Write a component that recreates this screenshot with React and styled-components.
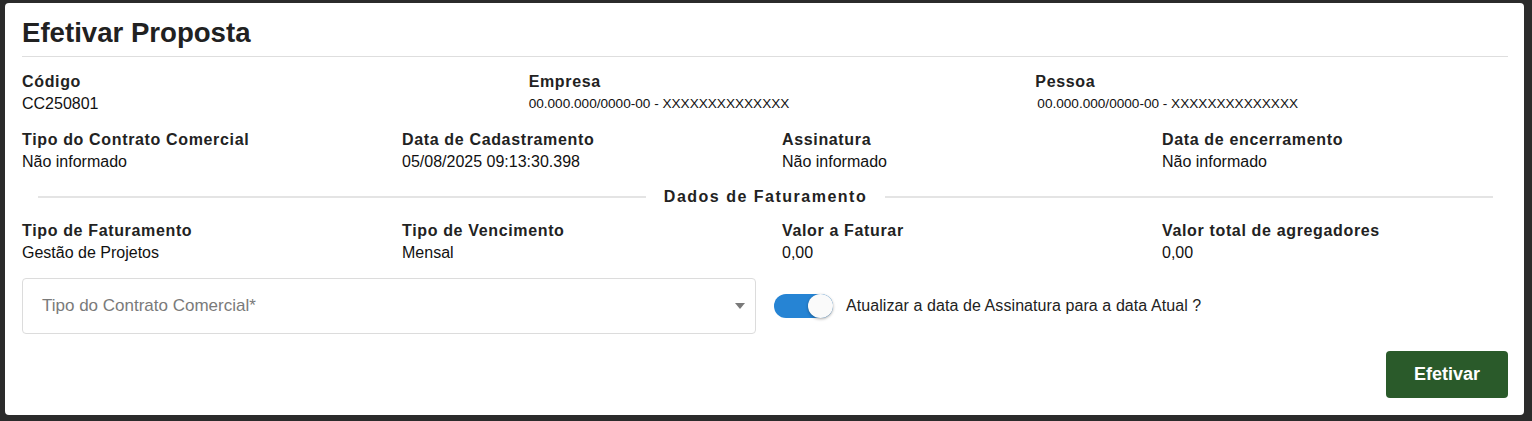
import styled, { createGlobalStyle } from "styled-components";

const GlobalStyle = createGlobalStyle`
  * { box-sizing: border-box; }
  body {
    margin: 0;
    background: #2b2b2b;
    font-family: "Liberation Sans", Arial, sans-serif;
    color: #212121;
  }
`;

const Page = styled.div`
  padding: 3px 8px 6px 5px;
`;

const Card = styled.section`
  background: #fff;
  border-radius: 4px;
  padding: 13px 16px 17px 17px;
  display: flex;
  flex-direction: column;
`;

const Title = styled.h4`
  margin: 0;
  font-size: 27.6px;
  line-height: 34px;
  font-weight: 700;
  color: #212121;
  padding-bottom: 6px;
  border-bottom: 1px solid #dedede;
`;

const InfoGrid = styled.div`
  display: grid;
  grid-template-columns: repeat(${(p) => p.$cols}, 1fr);
  column-gap: 34px;
  margin-top: ${(p) => p.$top}px;
`;

const Field = styled.div`
  display: flex;
  flex-direction: column;
`;

const Label = styled.span`
  font-size: 16px;
  line-height: 22px;
  font-weight: 700;
  letter-spacing: 0.65px;
  color: #222;
`;

const Value = styled.span`
  font-size: ${(p) => (p.$small ? "13.6px" : "16px")};
  line-height: 22px;
  color: #111;
  padding-left: ${(p) => p.$indent || 0}px;
`;

const Separator = styled.div`
  display: flex;
  align-items: center;
  gap: 18px;
  margin: 13px 15px 0 16px;
  height: 22px;
  &::before,
  &::after {
    content: "";
    flex: 1;
    height: 2px;
    background: #e4e4e4;
  }
  span {
    font-size: 16px;
    font-weight: 700;
    letter-spacing: 1.5px;
    color: #222;
  }
`;

const FormRow = styled.div`
  display: grid;
  grid-template-columns: 734px 1fr;
  column-gap: 18px;
  align-items: center;
  margin-top: 14px;
`;

const SelectBox = styled.div`
  height: 56px;
  border: 1px solid #dcdcdc;
  border-radius: 4px;
  display: flex;
  align-items: center;
  justify-content: space-between;
  padding: 0 10px 0 19px;
  color: #7a7a7a;
  font-size: 17px;
`;

const Caret = styled.span`
  width: 0;
  height: 0;
  border-left: 5px solid transparent;
  border-right: 5px solid transparent;
  border-top: 6px solid #7a7a7a;
`;

const ToggleWrap = styled.label`
  display: flex;
  align-items: center;
  gap: 13px;
  font-size: 16px;
  letter-spacing: 0.08px;
  color: #222;
`;

const Track = styled.span`
  position: relative;
  width: 59px;
  height: 24px;
  border-radius: 12px;
  background: ${(p) => (p.$on ? "#2684d4" : "#bbb")};
  flex-shrink: 0;
`;

const Knob = styled.span`
  position: absolute;
  top: 0;
  ${(p) => (p.$on ? "right: 0;" : "left: 0;")}
  width: 25px;
  height: 24px;
  border-radius: 50%;
  background: #fafafa;
  box-shadow: 0 1px 3px rgba(0, 0, 0, 0.35);
`;

const Actions = styled.div`
  display: flex;
  justify-content: flex-end;
  margin-top: 17px;
`;

const Button = styled.button`
  width: 122px;
  height: 47px;
  border: none;
  border-radius: 4px;
  background: #2a5a2a;
  color: #fff;
  font-family: inherit;
  font-size: 18px;
  font-weight: 700;
  cursor: pointer;
`;

const topRow = [
  { label: "Código", value: "CC250801" },
  { label: "Empresa", value: "00.000.000/0000-00 - XXXXXXXXXXXXXX", small: true },
  { label: "Pessoa", value: "00.000.000/0000-00 - XXXXXXXXXXXXXX", small: true, indent: 2 },
];

const contractRow = [
  { label: "Tipo do Contrato Comercial", value: "Não informado" },
  { label: "Data de Cadastramento", value: "05/08/2025 09:13:30.398" },
  { label: "Assinatura", value: "Não informado" },
  { label: "Data de encerramento", value: "Não informado" },
];

const billingRow = [
  { label: "Tipo de Faturamento", value: "Gestão de Projetos" },
  { label: "Tipo de Vencimento", value: "Mensal" },
  { label: "Valor a Faturar", value: "0,00" },
  { label: "Valor total de agregadores", value: "0,00" },
];

function InfoRow({ items, top }) {
  return (
    <InfoGrid $cols={items.length} $top={top}>
      {items.map((f) => (
        <Field key={f.label}>
          <Label>{f.label}</Label>
          <Value $small={f.small} $indent={f.indent}>
            {f.value}
          </Value>
        </Field>
      ))}
    </InfoGrid>
  );
}

export default function App() {
  return (
    <Page>
      <GlobalStyle />
      <Card>
        <Title>Efetivar Proposta</Title>
        <InfoRow items={topRow} top={14} />
        <InfoRow items={contractRow} top={14} />
        <Separator>
          <span>Dados de Faturamento</span>
        </Separator>
        <InfoRow items={billingRow} top={12} />
        <FormRow>
          <SelectBox>
            Tipo do Contrato Comercial*
            <Caret />
          </SelectBox>
          <ToggleWrap>
            <Track $on>
              <Knob $on />
            </Track>
            Atualizar a data de Assinatura para a data Atual ?
          </ToggleWrap>
        </FormRow>
        <Actions>
          <Button>Efetivar</Button>
        </Actions>
      </Card>
    </Page>
  );
}
